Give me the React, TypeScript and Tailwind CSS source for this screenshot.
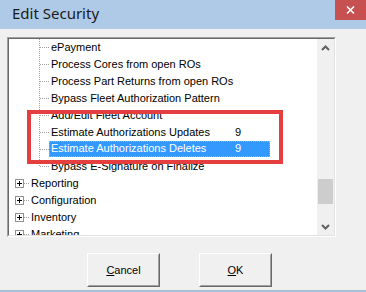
import React from "react";

const font = { fontFamily: '"Liberation Sans", Arial, sans-serif' };

function Plus() {
  return (
    <svg width="9" height="9" viewBox="0 0 9 9" className="block">
      <rect x="0.5" y="0.5" width="8" height="8" fill="#fff" stroke="#919191" />
      <line x1="2" y1="4.5" x2="7" y2="4.5" stroke="#000" />
      <line x1="4.5" y1="2" x2="4.5" y2="7" stroke="#000" />
    </svg>
  );
}

const children = [
  "ePayment",
  "Process Cores from open ROs",
  "Process Part Returns from open ROs",
  "Bypass Fleet Authorization Pattern",
  "Add/Edit Fleet Account",
];

const roots = ["Reporting", "Configuration", "Inventory", "Marketing"];

export default function App() {
  return (
    <div
      className="relative w-[366px] h-[292px] overflow-hidden bg-[#f0f0f0] flex flex-col border-b-2 border-[#a9bfd6]"
      style={font}
    >
      {/* Title bar */}
      <div className="relative h-[29px] shrink-0 bg-[#aecae7] flex items-center pl-[12px]">
        <span
          className="text-[15px] text-[#1a1a1a] leading-none -mt-[3px]"
          style={{ fontFamily: '"Noto Sans", "Open Sans", sans-serif' }}
        >
          Edit Security
        </span>
        <div className="absolute right-0 top-0 w-[31px] h-[20px] bg-[#c75050] flex items-center justify-center">
          <svg width="9" height="8" viewBox="0 0 9 8">
            <path d="M1 0.5 L8 7.5 M8 0.5 L1 7.5" stroke="#fff" strokeWidth="1.6" />
          </svg>
        </div>
      </div>

      {/* Tree box */}
      <div className="ml-[7px] mt-[8px] w-[329px] h-[200px] border border-t-[#a0a0a0] border-l-[#a0a0a0] border-r-white border-b-white">
        <div className="relative w-full h-full border border-t-[#696969] border-l-[#696969] border-r-[#e3e3e3] border-b-[#e3e3e3] bg-white flex overflow-hidden">
          <div className="relative flex-1 text-[11px] text-black leading-[17px]">
            {/* dotted lines */}
            <svg className="absolute left-0 top-0" width="60" height="200">
              <line x1="30.5" y1="0" x2="30.5" y2="127" stroke="#a0a0a0" strokeDasharray="1 1" />
              {[0, 1, 2, 3, 4, 5, 6, 7].map((i) => (
                <line
                  key={i}
                  x1="31"
                  y1={i * 17 + 8.5}
                  x2="40"
                  y2={i * 17 + 8.5}
                  stroke="#a0a0a0"
                  strokeDasharray="1 1"
                />
              ))}
              {[0, 1, 2, 3].map((i) => (
                <line
                  key={i}
                  x1="15"
                  y1={(8 + i) * 17 + 8.5}
                  x2="21"
                  y2={(8 + i) * 17 + 8.5}
                  stroke="#a0a0a0"
                  strokeDasharray="1 1"
                />
              ))}
            </svg>
            {children.map((c) => (
              <div key={c} className="h-[17px] pl-[42px] whitespace-nowrap">
                {c}
              </div>
            ))}
            <div className="h-[17px] pl-[42px] whitespace-nowrap flex">
              <span className="w-[184px]">Estimate Authorizations Updates</span>
              <span>9</span>
            </div>
            <div className="h-[17px] pl-[40px] whitespace-nowrap flex">
              <div className="h-[16px] w-[221px] bg-[#3399ff] text-white flex leading-[15px] px-[2px] outline-1 outline-dotted outline-[#f0a060] -outline-offset-1">
                <span className="w-[184px]">Estimate Authorizations Deletes</span>
                <span>9</span>
              </div>
            </div>
            <div className="h-[17px] pl-[42px] whitespace-nowrap">Bypass E-Signature on Finalize</div>
            {roots.map((r) => (
              <div key={r} className="h-[17px] flex items-center whitespace-nowrap">
                <div className="pl-[6px] pr-[7px]">
                  <Plus />
                </div>
                <span>{r}</span>
              </div>
            ))}
          </div>
          {/* Scrollbar */}
          <div className="w-[17px] h-full bg-[#f0f0f0] flex flex-col items-center">
            <div className="h-[17px] w-full flex items-center justify-center">
              <svg width="9" height="6" viewBox="0 0 9 6">
                <path d="M1 5 L4.5 1.5 L8 5" stroke="#606060" strokeWidth="2" fill="none" />
              </svg>
            </div>
            <div className="h-[123px]" />
            <div className="h-[25px] w-[15px] bg-[#cdcdcd]" />
            <div className="flex-1" />
            <div className="h-[17px] w-full flex items-center justify-center">
              <svg width="9" height="6" viewBox="0 0 9 6">
                <path d="M1 1 L4.5 4.5 L8 1" stroke="#606060" strokeWidth="2" fill="none" />
              </svg>
            </div>
          </div>
        </div>
      </div>

      {/* Red highlight box */}
      <div className="absolute left-[27px] top-[110px] w-[256px] h-[54px] border-4 border-[#e53e3e]" />

      {/* Buttons */}
      <div className="mt-[16px] pl-[87px] flex gap-[39px]">
        {["Cancel", "OK"].map((b) => (
          <div
            key={b}
            className="w-[73px] h-[34px] border border-t-white border-l-white border-r-[#696969] border-b-[#696969]"
          >
            <div className="w-full h-full border border-t-[#f0f0f0] border-l-[#f0f0f0] border-r-[#a0a0a0] border-b-[#a0a0a0] flex items-center justify-center text-[11px] text-black">
              <span>
                <u>{b[0]}</u>
                {b.slice(1)}
              </span>
            </div>
          </div>
        ))}
      </div>
    </div>
  );
}
